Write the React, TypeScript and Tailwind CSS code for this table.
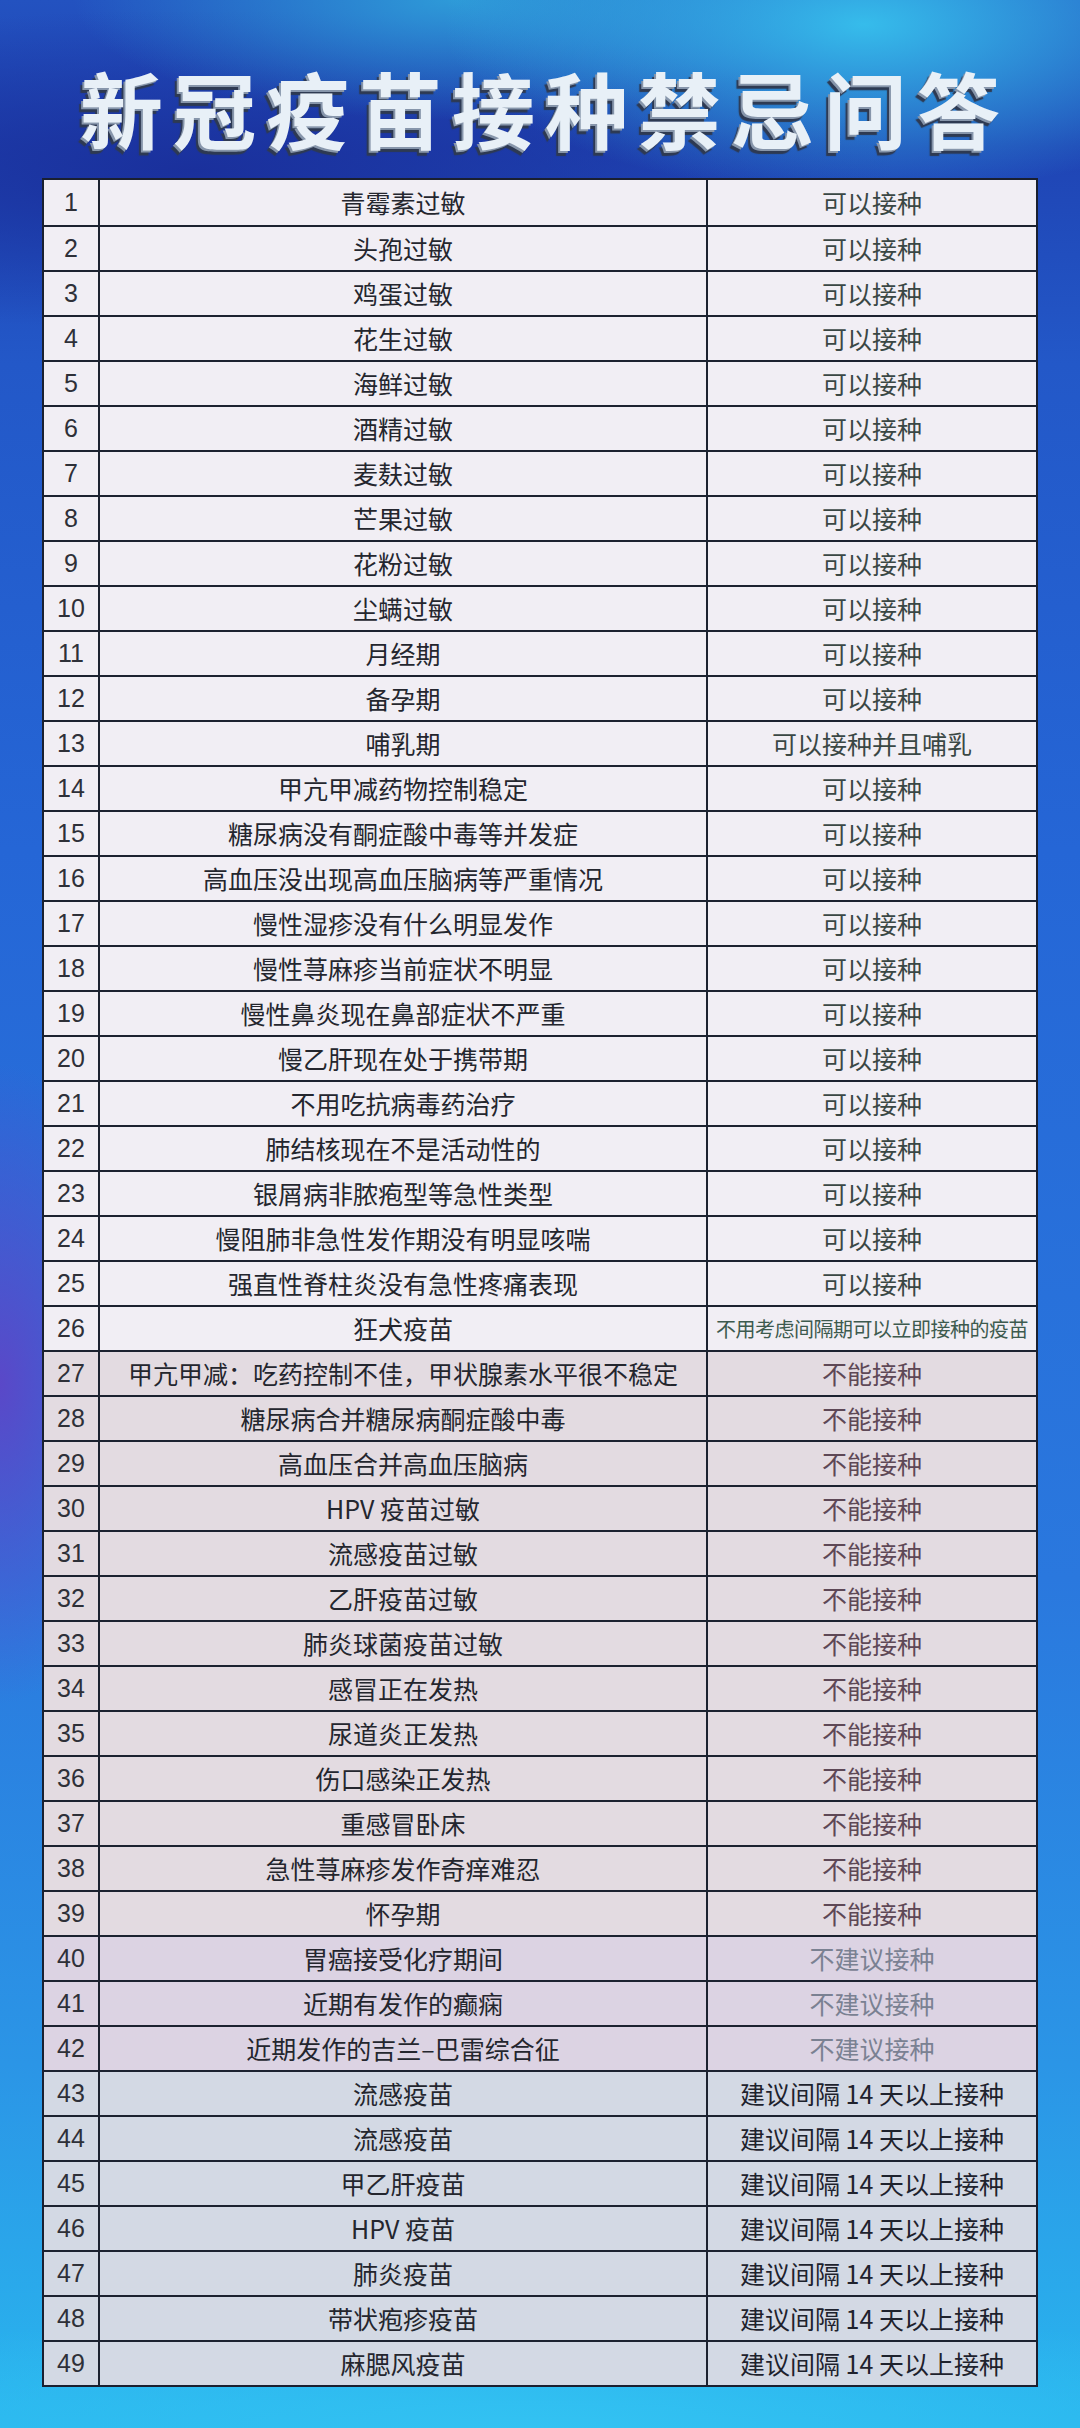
import React from "react";

type Kind = "ok" | "okg" | "no" | "notrec" | "gap";

const rows: [string, string, Kind][] = [
  ["青霉素过敏", "可以接种", "ok"],
  ["头孢过敏", "可以接种", "ok"],
  ["鸡蛋过敏", "可以接种", "ok"],
  ["花生过敏", "可以接种", "ok"],
  ["海鲜过敏", "可以接种", "ok"],
  ["酒精过敏", "可以接种", "ok"],
  ["麦麸过敏", "可以接种", "ok"],
  ["芒果过敏", "可以接种", "ok"],
  ["花粉过敏", "可以接种", "ok"],
  ["尘螨过敏", "可以接种", "ok"],
  ["月经期", "可以接种", "ok"],
  ["备孕期", "可以接种", "ok"],
  ["哺乳期", "可以接种并且哺乳", "ok"],
  ["甲亢甲减药物控制稳定", "可以接种", "ok"],
  ["糖尿病没有酮症酸中毒等并发症", "可以接种", "ok"],
  ["高血压没出现高血压脑病等严重情况", "可以接种", "ok"],
  ["慢性湿疹没有什么明显发作", "可以接种", "ok"],
  ["慢性荨麻疹当前症状不明显", "可以接种", "ok"],
  ["慢性鼻炎现在鼻部症状不严重", "可以接种", "ok"],
  ["慢乙肝现在处于携带期", "可以接种", "ok"],
  ["不用吃抗病毒药治疗", "可以接种", "ok"],
  ["肺结核现在不是活动性的", "可以接种", "ok"],
  ["银屑病非脓疱型等急性类型", "可以接种", "ok"],
  ["慢阻肺非急性发作期没有明显咳喘", "可以接种", "ok"],
  ["强直性脊柱炎没有急性疼痛表现", "可以接种", "ok"],
  ["狂犬疫苗", "不用考虑间隔期可以立即接种的疫苗", "okg"],
  ["甲亢甲减：吃药控制不佳，甲状腺素水平很不稳定", "不能接种", "no"],
  ["糖尿病合并糖尿病酮症酸中毒", "不能接种", "no"],
  ["高血压合并高血压脑病", "不能接种", "no"],
  ["HPV 疫苗过敏", "不能接种", "no"],
  ["流感疫苗过敏", "不能接种", "no"],
  ["乙肝疫苗过敏", "不能接种", "no"],
  ["肺炎球菌疫苗过敏", "不能接种", "no"],
  ["感冒正在发热", "不能接种", "no"],
  ["尿道炎正发热", "不能接种", "no"],
  ["伤口感染正发热", "不能接种", "no"],
  ["重感冒卧床", "不能接种", "no"],
  ["急性荨麻疹发作奇痒难忍", "不能接种", "no"],
  ["怀孕期", "不能接种", "no"],
  ["胃癌接受化疗期间", "不建议接种", "notrec"],
  ["近期有发作的癫痫", "不建议接种", "notrec"],
  ["近期发作的吉兰–巴雷综合征", "不建议接种", "notrec"],
  ["流感疫苗", "建议间隔 14 天以上接种", "gap"],
  ["流感疫苗", "建议间隔 14 天以上接种", "gap"],
  ["甲乙肝疫苗", "建议间隔 14 天以上接种", "gap"],
  ["HPV 疫苗", "建议间隔 14 天以上接种", "gap"],
  ["肺炎疫苗", "建议间隔 14 天以上接种", "gap"],
  ["带状疱疹疫苗", "建议间隔 14 天以上接种", "gap"],
  ["麻腮风疫苗", "建议间隔 14 天以上接种", "gap"],
];

const rowBg: Record<Kind, string> = {
  ok: "bg-[#f1eef4]",
  okg: "bg-[#f1eef4]",
  no: "bg-[#e3dbe1]",
  notrec: "bg-[#dcd3e3]",
  gap: "bg-[#d3d9e4]",
};

const ansCls: Record<Kind, string> = {
  ok: "text-[25px] text-[#3a4744]",
  okg: "text-[20px] text-[#3d5a4e] tracking-[-0.5px]",
  no: "text-[25px] text-[#5e4856]",
  notrec: "text-[25px] text-[#7a8192]",
  gap: "text-[25px] text-[#1e222d]",
};

export default function App() {
  return (
    <div
      className="w-[1080px] h-[2428px] overflow-hidden flex flex-col bg-[radial-gradient(ellipse_420px_170px_at_80%_1%,#36bceb_0%,rgba(54,188,235,0)_100%),radial-gradient(ellipse_380px_120px_at_42%_0%,#2e9ad8_0%,rgba(46,154,216,0)_100%),radial-gradient(ellipse_700px_160px_at_18%_7%,#1a309c_0%,rgba(26,48,156,0)_100%),radial-gradient(ellipse_150px_320px_at_0%_57%,#5a48c8_0%,rgba(90,72,200,0)_100%),radial-gradient(ellipse_900px_120px_at_50%_100%,#33c2f2_0%,rgba(51,194,242,0)_100%),linear-gradient(to_bottom,#2352c0_0%,#1f44b4_6%,#2358c8_15%,#2566d6_35%,#2a78de_65%,#2b95e6_85%,#29b6ee_100%)]"
      style={{ fontFamily: '"Noto Sans CJK SC", "Noto Sans", sans-serif' }}
    >
      <div className="h-[178px] shrink-0 flex items-center justify-center pt-[36px]">
        <h1 className="text-[83px] leading-none font-bold tracking-[10px] pl-[10px] text-[#e8f0f7] [text-shadow:-2px_2px_0_#8796ab,-4px_5px_1px_#2e3a52]">
          新冠疫苗接种禁忌问答
        </h1>
      </div>
      <div className="mx-[42px] w-[996px] border-2 border-[#1a2030]">
        {rows.map(([item, ans, kind], i) => (
          <div
            key={i}
            className={`grid grid-cols-[56px_608px_1fr] h-[45px] ${i === 0 ? "" : "border-t-2 border-[#1c2230]"} ${rowBg[kind]}`}
          >
            <div
              className="flex items-center justify-center border-r-2 border-[#1c2230] text-[25px] text-[#2e3038]"
              style={{ fontFamily: '"Liberation Sans", Arial, sans-serif' }}
            >
              {i + 1}
            </div>
            <div className="flex items-center justify-center border-r-2 border-[#1c2230] text-[25px] text-[#24262e] whitespace-nowrap">
              {item}
            </div>
            <div className={`flex items-center justify-center whitespace-nowrap ${ansCls[kind]}`}>
              {ans}
            </div>
          </div>
        ))}
      </div>
    </div>
  );
}
